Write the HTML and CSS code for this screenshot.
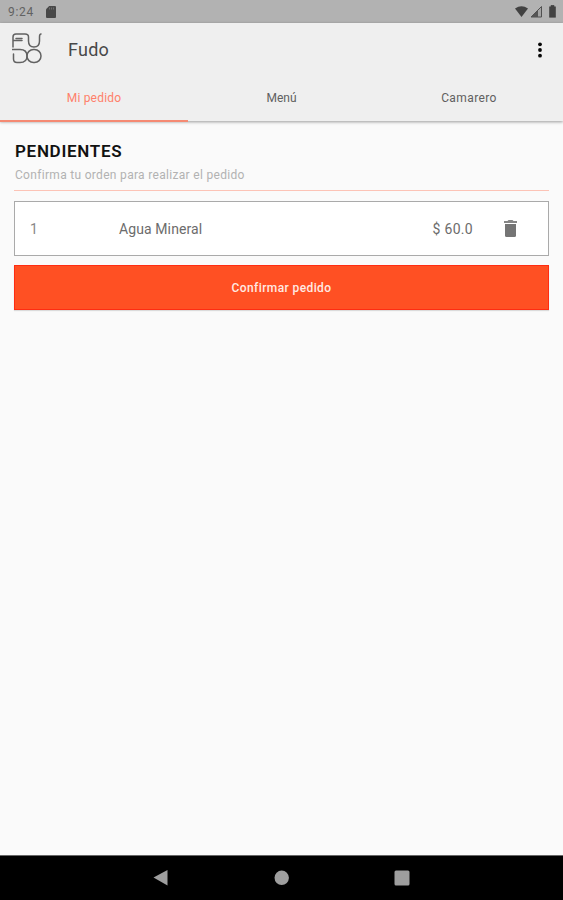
FILE: index.html
```html
<!DOCTYPE html>
<html lang="es">
<head>
<meta charset="utf-8">
<title>Fudo</title>
<link rel="stylesheet" href="styles.css">
</head>
<body>
<div class="status">
  <span class="time">9:24</span>
  <svg class="sd" width="10" height="12" viewBox="0 0 10 12"><path d="M3.2 0H9a1 1 0 0 1 1 1v10a1 1 0 0 1-1 1H1a1 1 0 0 1-1-1V3.2z" fill="#484848"/><path d="M3.5 1.5v2M5.5 1.5v2M7.5 1.5v2" stroke="#777" stroke-width=".8"/></svg>
  <svg class="signals" width="44" height="14" viewBox="0 0 44 14"><path d="M1 3.6Q7.500-1 14 3.600L7.500 12z" fill="#424242"/><path d="M27.500 1.500v10.500H17z" fill="#a4a4a4" stroke="#505050"/><path d="M17 12 24 5v7z" fill="#555"/><path d="M36 1.500h1.500V0h3v1.500H42V12h-6z" transform="translate(-.5 .3)" fill="#424242" stroke="#424242" stroke-width=".6" stroke-linejoin="round"/></svg>
</div>
<header>
  <div class="bar">
    <svg class="logo" width="30" height="31" viewBox="0 0 30 31" fill="none" stroke="#626262" stroke-width="1.500" stroke-linecap="round"><path d="M1 14V4Q1 1 4 1H13Q16.500 1 16.500 4V8Q16.500 14 22 14T27.500 8V4Q27.500 1 29 1M1 7.500H10M4 5.500H10M0 16.500H8Q15 16.500 15 23T8 29.500H5Q1.500 29.500 1.500 26V21"/><rect x="15" y="16.500" width="14" height="13" rx="6.500"/></svg>
    <h1>Fudo</h1>
    <svg class="more" width="6" height="18" viewBox="0 0 6 18" fill="#080808"><circle cx="3" cy="3.300" r="1.900"/><circle cx="3" cy="9" r="1.900"/><circle cx="3" cy="14.700" r="1.900"/></svg>
  </div>
  <nav>
    <span class="tab active">Mi pedido</span>
    <span class="tab menu">Menú</span>
    <span class="tab waiter">Camarero</span>
  </nav>
</header>
<main>
  <h2>PENDIENTES</h2>
  <p>Confirma tu orden para realizar el pedido</p>
  <div class="item">
    <span class="qty">1</span>
    <span class="name">Agua Mineral</span>
    <span class="price">$ 60.0</span>
    <svg width="13" height="17" viewBox="0 0 13 17"><path d="M0 1h3.500l1-1h4l1 1H13v2H0z" fill="#868686"/><path d="M1 4h11v11.500Q12 17 10.500 17h-8Q1 17 1 15.500z" fill="#757575"/></svg>
  </div>
  <button>Confirmar pedido</button>
</main>
<footer>
  <svg width="563" height="44" viewBox="0 0 563 44" fill="#9e9e9e"><path d="M153.500 21.500 167.500 14v15.500z"/><circle cx="281.700" cy="21.800" r="7.200"/><rect x="394.500" y="14.500" width="15" height="15" rx="1.500"/></svg>
</footer>
</body>
</html>
```
FILE: styles.css
```css
* { box-sizing: border-box; }
body {
  margin: 0;
  height: 900px;
  display: flex;
  flex-direction: column;
  background: #fafafa;
  font-family: Roboto, sans-serif;
  overflow: hidden;
}
.status {
  height: 23px;
  flex: none;
  background: #b2b2b2;
  display: flex;
  align-items: center;
  padding: 1px 5px 0 8px;
}
.time { font-size: 12px; letter-spacing: .7px; color: #626262; line-height: 22px; width: 38px; }
.signals { margin-left: auto; }
header {
  height: 98px;
  flex: none;
  background: #efefef;
  box-shadow: 0 1px 3px rgba(0, 0, 0, .38);
}
.bar { height: 53px; display: flex; align-items: center; padding: 0 20px 0 12px; }
.logo { position: relative; top: -1px; }
h1 { margin: 0 0 0 26px; font-size: 18px; font-weight: 400; letter-spacing: .25px; color: #484848; }
.more { margin-left: auto; }
nav { height: 45px; display: grid; grid-template-columns: 188px 187px 188px; }
.tab {
  text-align: center;
  font-size: 12px;
  line-height: 44px;
  letter-spacing: .4px;
  color: #606060;
}
.tab.active { color: #ff806b; letter-spacing: .2px; border-bottom: 2px solid #f58a73; }
.tab.menu { letter-spacing: 0; }
main { flex: 1; padding: 18px 14px 0; }
h2 { margin: 0 0 0 1px; font-size: 17px; line-height: 24px; font-weight: 600; letter-spacing: .7px; color: #111; white-space: nowrap; }
p {
  margin: 0 0 10px;
  height: 28px;
  font-size: 12px;
  line-height: 25px;
  letter-spacing: .31px;
  padding-left: 1px;
  color: #b2b2b2;
  border-bottom: 1px solid #fcc3b6;
}
.item {
  height: 55px;
  border: 1px solid #aaa;
  background: #fff;
  display: flex;
  align-items: center;
  padding: 0 31px 0 15px;
  font-size: 14px;
  color: #6c6c6c;
}
.qty { width: 89px; color: #888; }
.name { letter-spacing: .1px; }
.price { margin-left: auto; margin-right: 31px; letter-spacing: .3px; }
button {
  display: block;
  width: 100%;
  height: 45px;
  margin-top: 9px;
  padding: 0;
  border: 1px solid #ff2c12;
  background: #ff5023;
  color: #ffeae2;
  font: 500 12px Roboto, sans-serif;
  letter-spacing: .4px;
  box-shadow: 0 1px 1px rgba(0, 0, 0, .12);
}
footer { height: 45px; flex: none; background: #000; border-top: 1px solid #666; }
footer svg { display: block; }
```
